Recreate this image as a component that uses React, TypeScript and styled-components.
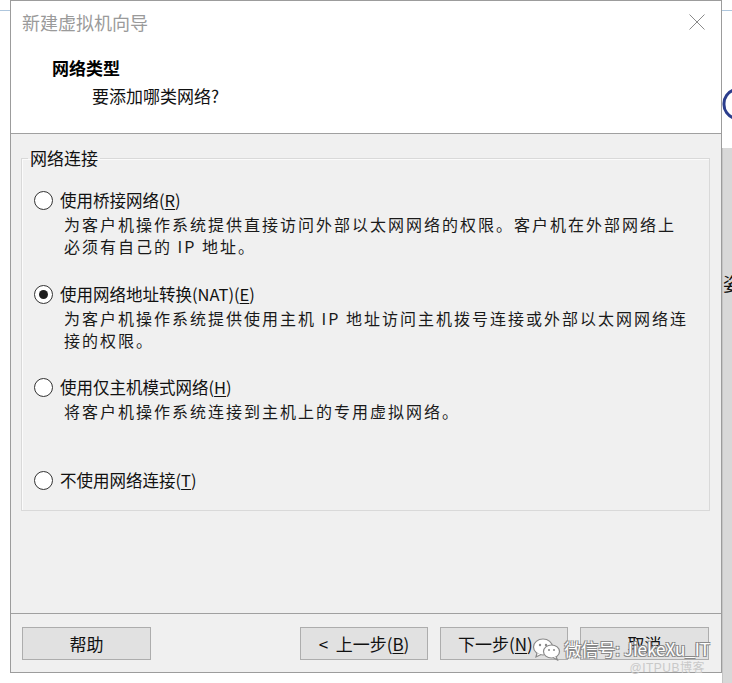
import React from 'react';
import styled, { createGlobalStyle } from 'styled-components';

const GlobalStyle = createGlobalStyle`
  html, body {
    margin: 0;
    padding: 0;
    background: #ffffff;
  }
  body {
    font-family: 'Noto Sans CJK SC', 'Noto Sans', sans-serif;
    color: #111;
  }
`;

const Page = styled.div`
  position: relative;
  display: flex;
  width: 732px;
  height: 683px;
  overflow: hidden;
  background: #fff;
`;

const SideStrip = styled.div<{ $wide?: boolean }>`
  display: flex;
  flex-direction: column;
  flex: ${(p) => (p.$wide ? '1' : '0 0 10px')};
  min-width: 0;
  overflow: hidden;
`;

const StripLine = styled.div`
  height: 1px;
  margin-top: 10px;
  background: #aec6dd;
`;

const ArcBox = styled.div`
  margin-top: 77px;
  height: 32px;
`;

const GreyPanel = styled.div`
  margin-top: 28px;
  flex: 1;
  background: #d8d8d8;
  border-left: 1px solid #c4c4c4;
  padding-top: 124px;
  font-size: 18px;
  line-height: 22px;
  color: #111;
  white-space: nowrap;
`;

const Window = styled.div`
  display: flex;
  flex-direction: column;
  width: 710px;
  height: 671px;
  border: 1px solid #9c9c9c;
  background: #f0f0f0;
`;

const Header = styled.div`
  height: 133px;
  box-sizing: border-box;
  background: #ffffff;
  border-bottom: 1px solid #a0a0a0;
  padding: 10px 16px 0 11px;
`;

const TitleBar = styled.div`
  display: flex;
  justify-content: space-between;
  align-items: center;
  height: 22px;
`;

const Title = styled.div`
  font-size: 18px;
  line-height: 22px;
  color: #9a9a9a;
`;

const Heading = styled.div`
  margin: 23px 0 0 30px;
  font-size: 17px;
  line-height: 24px;
  font-weight: 700;
  color: #000;
`;

const SubHeading = styled.div`
  margin: 4px 0 0 70px;
  font-size: 17px;
  line-height: 24px;
  color: #111;
`;

const Body = styled.div`
  flex: 1;
  padding: 13px 11px 0 10px;
`;

const Group = styled.fieldset`
  margin: 0;
  min-width: 0;
  padding: 19px 0 18px 12px;
  border: 1px solid #d9d9d9;
  box-shadow: inset 1px 1px 0 #fbfbfb;
`;

const Legend = styled.legend`
  margin-left: -6px;
  padding: 0 2px;
  font-size: 17px;
  line-height: 22px;
  color: #111;
`;

const OptionList = styled.div`
  display: grid;
  grid-template-rows: 94px 93px 93px 24px;
`;

const Option = styled.div`
  display: flex;
  flex-direction: column;
`;

const OptionLabel = styled.label`
  display: flex;
  align-items: center;
  gap: 7px;
  height: 24px;
  font-size: 16.5px;
  color: #111;
  u {
    text-decoration-thickness: 1px;
    text-underline-offset: 2px;
  }
`;

const Radio = styled.span<{ $checked?: boolean }>`
  position: relative;
  flex: 0 0 auto;
  width: 17px;
  height: 17px;
  border: 1px solid #333;
  border-radius: 50%;
  background: #fff;
  &::after {
    content: '';
    display: ${(p) => (p.$checked ? 'block' : 'none')};
    position: absolute;
    left: 4px;
    top: 4px;
    width: 9px;
    height: 9px;
    border-radius: 50%;
    background: #1e1e1e;
  }
`;

const Description = styled.div`
  margin-left: 30px;
  margin-top: 1px;
  font-size: 16px;
  line-height: 22px;
  letter-spacing: 2px;
  color: #1a1a1a;
`;

const Footer = styled.div`
  display: flex;
  align-items: center;
  gap: 12px;
  height: 59px;
  box-sizing: border-box;
  padding: 13px 12px 12px 11px;
  border-top: 1px solid #a0a0a0;
`;

const Spacer = styled.div`
  flex: 1;
`;

const Button = styled.button<{ $w: number }>`
  width: ${(p) => p.$w}px;
  height: 33px;
  padding: 0;
  border: 1px solid #adadad;
  background: #e1e1e1;
  font-family: 'Noto Sans CJK SC', 'Noto Sans', sans-serif;
  font-size: 17px;
  color: #111;
  white-space: pre;
  u {
    text-underline-offset: 2px;
  }
`;

const Watermark = styled.div`
  position: absolute;
  right: 22px;
  bottom: 22px;
  display: flex;
  align-items: center;
  gap: 2px;
  font-family: 'Noto Sans CJK SC', 'Liberation Sans', sans-serif;
  font-size: 17px;
  color: #fff;
  text-shadow: -1px -1px 0 #8a8a8a, 1px -1px 0 #8a8a8a, -1px 1px 0 #8a8a8a, 1px 1px 0 #8a8a8a;
`;

const Credit = styled.div`
  position: absolute;
  right: 27px;
  bottom: 8px;
  font-family: 'Liberation Sans', 'Noto Sans CJK SC', sans-serif;
  font-size: 12px;
  color: #c9c9c9;
  letter-spacing: 0.5px;
`;

const CloseIcon = () => (
  <svg width="16" height="16" viewBox="0 0 16 16">
    <path d="M0.5 0.5 L15.5 15.5 M15.5 0.5 L0.5 15.5" stroke="#8a8a8a" strokeWidth="1" fill="none" />
  </svg>
);

const WeChatIcon = () => (
  <svg width="30" height="24" viewBox="0 0 30 24">
    <ellipse cx="11" cy="10" rx="9.5" ry="8" fill="#fff" stroke="#8a8a8a" strokeWidth="1.2" />
    <path d="M5 16 L4 20 L9 17.5" fill="#fff" stroke="#8a8a8a" strokeWidth="1.2" />
    <ellipse cx="19.5" cy="14.5" rx="8" ry="6.5" fill="#fff" stroke="#8a8a8a" strokeWidth="1.2" />
    <path d="M24 19.5 L25.5 23 L21 20.5" fill="#fff" stroke="#8a8a8a" strokeWidth="1.2" />
    <circle cx="8" cy="8" r="1.2" fill="#8a8a8a" />
    <circle cx="14" cy="8" r="1.2" fill="#8a8a8a" />
    <circle cx="17" cy="13" r="1" fill="#8a8a8a" />
    <circle cx="22" cy="13" r="1" fill="#8a8a8a" />
  </svg>
);

type Opt = {
  label: React.ReactNode;
  desc?: React.ReactNode;
  checked?: boolean;
};

const options: Opt[] = [
  {
    label: (
      <>
        使用桥接网络(<u>R</u>)
      </>
    ),
    desc: (
      <>
        为客户机操作系统提供直接访问外部以太网网络的权限。客户机在外部网络上
        <br />
        必须有自己的 IP 地址。
      </>
    ),
  },
  {
    label: (
      <>
        使用网络地址转换(NAT)(<u>E</u>)
      </>
    ),
    desc: (
      <>
        为客户机操作系统提供使用主机 IP 地址访问主机拨号连接或外部以太网网络连
        <br />
        接的权限。
      </>
    ),
    checked: true,
  },
  {
    label: (
      <>
        使用仅主机模式网络(<u>H</u>)
      </>
    ),
    desc: <>将客户机操作系统连接到主机上的专用虚拟网络。</>,
  },
  {
    label: (
      <>
        不使用网络连接(<u>T</u>)
      </>
    ),
  },
];

export default function App() {
  return (
    <Page>
      <GlobalStyle />
      <SideStrip>
        <StripLine />
      </SideStrip>
      <Window>
        <Header>
          <TitleBar>
            <Title>新建虚拟机向导</Title>
            <CloseIcon />
          </TitleBar>
          <Heading>网络类型</Heading>
          <SubHeading>要添加哪类网络?</SubHeading>
        </Header>
        <Body>
          <Group>
            <Legend>网络连接</Legend>
            <OptionList>
              {options.map((o, i) => (
                <Option key={i}>
                  <OptionLabel>
                    <Radio $checked={o.checked} />
                    <span>{o.label}</span>
                  </OptionLabel>
                  {o.desc && <Description>{o.desc}</Description>}
                </Option>
              ))}
            </OptionList>
          </Group>
        </Body>
        <Footer>
          <Button $w={129}>帮助</Button>
          <Spacer />
          <Button $w={128}>
            {'<  上一步('}
            <u>B</u>)
          </Button>
          <Button $w={128}>
            下一步(<u>N</u>)
            {'  >'}
          </Button>
          <Button $w={129}>取消</Button>
        </Footer>
      </Window>
      <SideStrip $wide>
        <StripLine />
        <ArcBox>
          <svg width="12" height="32" viewBox="0 0 12 32">
            <path d="M12 2 A14 14 0 0 0 2 16 A14 14 0 0 0 12 30" stroke="#2b3d8c" strokeWidth="3" fill="none" />
          </svg>
        </ArcBox>
        <GreyPanel>姿</GreyPanel>
      </SideStrip>
      <Watermark>
        <WeChatIcon />
        <span>微信号: JiekeXu_IT</span>
      </Watermark>
      <Credit>@ITPUB博客</Credit>
    </Page>
  );
}
